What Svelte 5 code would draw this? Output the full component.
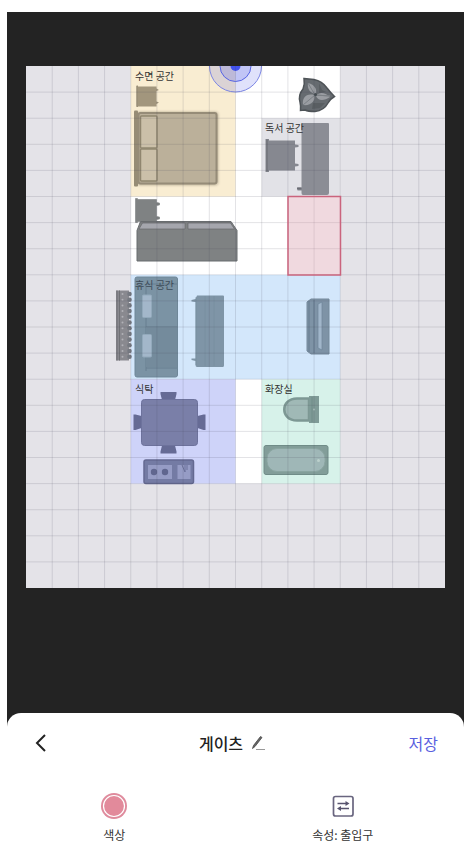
<script>
  const columns = 16;
  const rows = 20;
  const cell = { w: 419 / columns, h: 522 / rows };
  const left = 26;
  const top = 66;
  const verticals = Array.from({ length: columns - 1 }, (_, i) => left + (i + 1) * cell.w);
  const horizontals = Array.from({ length: rows - 1 }, (_, i) => top + (i + 1) * cell.h);

  // Zones in grid cells: column, row, width, height
  const zones = [
    { c: 4, r: 0, w: 8, h: 16, fill: '#ffffff' },
    { c: 4, r: 0, w: 4, h: 5, fill: '#f9edd2' },
    { c: 9, r: 2, w: 3, h: 3, fill: '#e2e2e7' },
    { c: 4, r: 8, w: 8, h: 4, fill: '#d3e7fb' },
    { c: 4, r: 12, w: 4, h: 4, fill: '#ced3f9' },
    { c: 9, r: 12, w: 3, h: 4, fill: '#d7f2ea' }
  ];

  const labels = [
    { x: 135, y: 80, text: '수면 공간' },
    { x: 265, y: 132, text: '독서 공간' },
    { x: 135, y: 289, text: '휴식 공간', covered: true },
    { x: 135, y: 393, text: '식탁' },
    { x: 265, y: 393, text: '화장실' }
  ];

  const scallops = Array.from({ length: 12 }, (_, i) => 294 + i * 5.7);
</script>

<main class="screen">
  <section class="canvas">
    <svg class="plan" viewBox="26 66 419 522" role="img" aria-label="평면도">
      <defs>
        <filter id="soft" x="-10%" y="-10%" width="120%" height="120%">
          <feGaussianBlur stdDeviation="1.5" />
        </filter>
      </defs>
      <rect x="26" y="66" width="419" height="522" fill="#e4e3e8" />
      {#each zones as z}
        <rect x={left + z.c * cell.w} y={top + z.r * cell.h} width={z.w * cell.w} height={z.h * cell.h} fill={z.fill} />
      {/each}

      <!-- entrance marker -->
      <g stroke="#7c86e4">
        <circle cx="235.5" cy="66" r="26" fill="#4655e6" fill-opacity=".17" />
        <circle cx="235.5" cy="66" r="15.5" fill="#4655e6" fill-opacity=".2" stroke="#5865e5" />
        <circle cx="235.5" cy="66" r="5" fill="#4253ee" stroke="none" />
      </g>

      <!-- bedside table -->
      <path d="M136.500 85.500h1.500v1h18.500v2l2.500 1.500-2.500 1v10.500l2.500 1-2.500 1.500v2.500H138v.5h-1.500z" fill="#a2967d" />
      <path d="M137 86v20.500" stroke="#918772" />

      <!-- bed -->
      <rect x="137" y="112" width="81" height="73" rx="3" fill="#968c77" filter="url(#soft)" opacity=".75" />
      <rect x="134" y="110.500" width="4" height="76" rx="1" fill="#968c75" />
      <rect x="138.500" y="113" width="78" height="70.500" rx="2" fill="#bbb09a" stroke="#968c78" stroke-width="2" />
      <g fill="#cbc0a9" stroke="#90866f" stroke-width="1.500">
        <rect x="140.500" y="116" width="16.500" height="32" rx="1" />
        <rect x="140.500" y="149" width="16.500" height="32" rx="1" />
      </g>

      <!-- plant -->
      <path d="M304 78.500Q309 79 314 79.500Q322 81 327 88Q330 92 334.500 96.500Q330 99 328 103Q324 110.500 315 111.500Q308 111.500 305 110L300.500 110.500Q301 106 300 102Q298 95 303 89Q305 84 304 78.500z" fill="#666b70" stroke="#4e5357" stroke-width="1.500" />
      <path d="M308 83c7 2 9 6 8 11-6-1-9-5-8-11z M330 97c-6 4-12 4-14-1 4-5 9-3 14 1z M303 105c-1-7 3-12 11-10 2 6-3 11-11 10z" fill="#9a9da2" />
      <path d="M308 83l7 12 15 1-15-1-12 10" fill="none" stroke="#7b8085" />
      <path d="M319 83l3 7 4 2-7 1z M313 103l8 0 4 0-5 5-8 1z" fill="#595e62" />
      <circle cx="315.500" cy="94.500" r="1.500" fill="#444b50" />

      <!-- reading desk and chair -->
      <path d="M265.500 139h3.500v1.500h26v4l3.500.5v2l-3.500.5v16l3.500.5v2l-3.500.5v4h-26v1.500h-3.500z" fill="#868890" />
      <path d="M267 139.500v32" stroke="#777980" stroke-width="2" />
      <path d="M302 123h26q1 0 1 1v69q0 2-2 2h-24q-1.500 0-1.500-2v-2.500h-4v-3h4V124z" fill="#8b8d95" />
      <path d="M297 188.500h4.500" stroke="#6c6e76" stroke-width="2" />

      <!-- cabinet and sideboard -->
      <path d="M135.500 198.500h2v1h19v3l3 .5v2l-3 .5v11l3 .5v2l-3 .5v2h-19v1h-2z" fill="#7f8283" stroke="#6f7273" stroke-width=".5" />
      <path d="M140.500 221.500h90.500l6 9v30.500H137v-30.500z" fill="#7f8283" stroke="#696c6f" />
      <path d="M142.500 223h42.500v6h-46z M188 223h42.500l4 6H188z" fill="#a5a6ad" stroke="#67696b" stroke-width=".7" />

      <!-- curtain -->
      <path d="M116 290.500h13v70h-13z" fill="#89898f" />
      {#each scallops as y}
        <circle cx="129.500" cy={y} r="2.300" fill="#757981" />
        <circle cx="122.500" cy={y} r="1" fill="#b1b1b7" />
      {/each}
      <path d="M117 290.500v70M119.500 290.500v70" stroke="#707176" />

      <!-- sofa -->
      <rect x="135" y="277" width="42.500" height="100" rx="2" fill="#7b93a4" stroke="#6f8798" />
      <path d="M146 284v87M146 284h31M146 327h31M146 368h31" stroke="#687f90" fill="none" />
      <path d="M146 327h31v40h-31z" fill="#748b9c" />
      <g fill="#a3b7ca" stroke="#92a9bb">
        <rect x="142.500" y="295" width="9" height="22.500" rx="1" />
        <rect x="142.500" y="334.500" width="9" height="22.500" rx="1" />
      </g>

      <!-- low table -->
      <path d="M197 295.500h26q1 0 1 1v69q0 1.500-1.500 1.500H197q-1.500 0-1.500-2v-4l-4-1v-1.500h4V302l-4-.5v-1.500l4-1z" fill="#7f95a7" />
      <path d="M196 297v68M205 296v70M214 296v70" stroke="#748b9c" opacity=".6" />

      <!-- television -->
      <path d="M311 299h18v55h-18l-4-3v-49z" fill="#7e93a6" stroke="#74899b" />
      <path d="M309 301v51M314 300v53" stroke="#667d90" />
      <path d="M318 304l4-2v48l-4-2z" fill="#a1b6ca" stroke="#6e8599" stroke-width=".7" />

      <!-- dining set -->
      <g fill="#666b95">
        <path d="M160.500 392h16v2l-1.500 6h-13l-1.500-6z M160.500 453.500h16v-2l-1.500-6h-13l-1.500 6z" />
        <path d="M133.500 414.500h2l6 1.500v12l-6 2h-2z M205.500 414.500h-2l-6 1.500v12l6 2h2z" />
      </g>
      <rect x="141.500" y="399.500" width="56" height="46" rx="3" fill="#7a7fa8" stroke="#6d729c" />

      <!-- cooktop -->
      <rect x="144" y="460" width="49.500" height="23.500" rx="2" fill="#747ba4" stroke="#646991" stroke-width="1.500" />
      <rect x="148" y="465" width="24" height="14" fill="#969cc5" />
      <rect x="177.500" y="465" width="13" height="14" fill="#969cc5" />
      <g fill="#60668f"><circle cx="154" cy="472" r="3.200" /><circle cx="165" cy="472" r="3.200" /></g>
      <path d="M182 465l3 7v-7M187 465v5" stroke="#6b719a" fill="none" />

      <!-- toilet -->
      <path d="M309 398.500h-12c-17 0-17 22 0 22h12z" fill="#a0b9b6" stroke="#7d9894" stroke-width="2.500" />
      <path d="M309 396h10v27h-10z" fill="#7f9b97" />
      <path d="M312 397v25" stroke="#708c88" /><circle cx="314" cy="409.500" r="1" fill="#a9bfbb" />

      <!-- bathtub -->
      <rect x="264" y="445.500" width="64" height="29" rx="2" fill="#829d99" stroke="#708c88" />
      <rect x="267" y="448.500" width="58" height="23" rx="10" fill="#9fb7b7" stroke="#8aa5a1" />
      <circle cx="318.500" cy="460.500" r="1.500" fill="#bcd0cc" />

      <g stroke="#45465a" stroke-opacity=".15">
        {#each verticals as x}<line x1={x} x2={x} y1="66" y2="588" />{/each}
        {#each horizontals as y}<line x1="26" x2="445" y1={y} y2={y} />{/each}
      </g>

      <!-- selected gate -->
      <rect x="288" y="196.500" width="52.500" height="78.500" fill="#d0899a" fill-opacity=".32" stroke="#ca647d" stroke-width="1.500" />

      <g class="labels">
        {#each labels as l}<text x={l.x} y={l.y} class:covered={l.covered}>{l.text}</text>{/each}
      </g>
    </svg>
  </section>

  <section class="sheet">
    <header>
      <button class="back" aria-label="뒤로">
        <svg width="12" height="18" viewBox="0 0 12 18"><path d="M10 1L2 9l8 8" fill="none" stroke="#222" stroke-width="2" /></svg>
      </button>
      <div class="title">
        <h1>게이츠</h1>
        <button aria-label="이름 수정">
          <svg width="15" height="16" viewBox="0 0 15 16">
            <path d="M1.500 13.500l1-3 7-9 1.500 1-7 9z" fill="#666" stroke="#444" stroke-width=".8" />
            <path d="M5 14.500h9" stroke="#999" />
          </svg>
        </button>
      </div>
      <button class="save">저장</button>
    </header>
    <div class="actions">
      <button>
        <svg width="26" height="26" viewBox="0 0 26 26">
          <circle cx="13" cy="13" r="13" fill="#df8b9d" />
          <circle cx="13" cy="13" r="10.500" fill="#e28a9b" stroke="#fff" stroke-width="1.200" />
        </svg>
        <span>색상</span>
      </button>
      <button>
        <svg width="26" height="26" viewBox="0 0 26 26">
          <rect x="3.500" y="3.500" width="19.500" height="19.500" rx="2" fill="none" stroke="#69657f" stroke-width="1.700" />
          <path d="M7.500 10.500h9M10 15.500h9" stroke="#58546f" stroke-width="1.400" />
          <path d="M15.500 8l4 2.500-4 2.500zM11 13l-4 2.500 4 2.500z" fill="#58546f" />
        </svg>
        <span>속성: 출입구</span>
      </button>
    </div>
  </section>
</main>

<style>
  :global(body) {
    background: #fff;
  }
  .screen {
    box-sizing: border-box;
    min-height: 100vh;
    margin: 0 10px 0 7px;
    padding-top: 12px;
    display: flex;
    flex-direction: column;
    font-family: "Noto Sans CJK KR", sans-serif;
    background: linear-gradient(#fff 12px, #232323 12px);
  }
  .canvas {
    flex: 1;
    padding: 54px 19px 125px;
  }
  .plan {
    display: block;
    width: 100%;
    height: auto;
  }
  .labels {
    font-size: 10px;
    fill: #333;
  }
  .covered {
    fill: #3d4b58;
  }
  .sheet {
    padding-bottom: 19px;
    border-radius: 14px 14px 0 0;
    background: #fff;
  }
  header {
    display: grid;
    grid-template-columns: 1fr auto 1fr;
    align-items: center;
    height: 60px;
    padding: 0 26px;
  }
  button {
    display: flex;
    align-items: center;
    padding: 0;
    border: 0;
    background: none;
    font: inherit;
    color: #333;
    cursor: pointer;
  }
  .back {
    justify-self: start;
    padding: 4px 2px;
  }
  .title {
    display: flex;
    align-items: center;
    gap: 8px;
    padding-right: 6px;
  }
  h1 {
    margin: 0;
    font-size: 16px;
    line-height: 24px;
    font-weight: 500;
    color: #222;
  }
  .save {
    justify-self: end;
    font-size: 16px;
    line-height: 24px;
    color: #5960df;
  }
  .actions {
    display: grid;
    grid-template-columns: 1fr 1fr;
    column-gap: 14px;
    padding: 20px 14px 0 0;
  }
  .actions button {
    flex-direction: column;
    gap: 6px;
    font-size: 12px;
    line-height: 20px;
  }
</style>
